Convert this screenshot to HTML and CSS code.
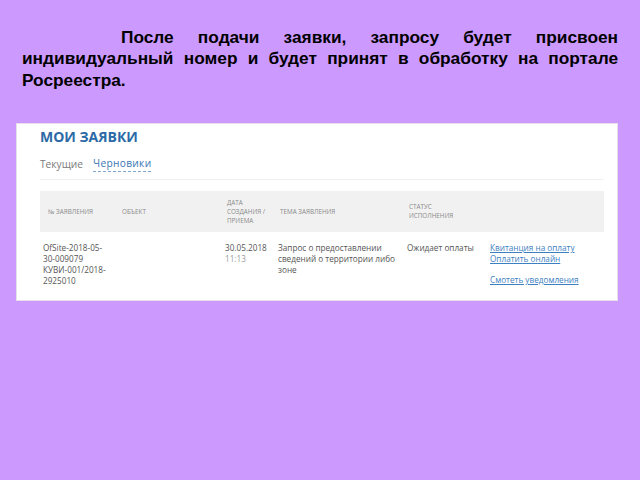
FILE: index.html
```html
<!DOCTYPE html>
<html lang="ru">
<head>
  <meta charset="UTF-8" />
  <title>Мои заявки</title>
  <link rel="stylesheet" href="styles.css">
</head>
<body>
  <p class="intro">После подачи заявки, запросу будет присвоен индивидуальный номер и будет принят в обработку на портале Росреестра.</p>

  <div class="panel">
    <h1 class="panel-title">МОИ ЗАЯВКИ</h1>
    <div class="tabs">
      <span class="tab">Текущие</span>
      <span class="tab tab-active">Черновики</span>
    </div>

    <div class="orders">
      <div class="orders-head">
        <div class="cell cell-num">№ заявления</div>
        <div class="cell">Объект</div>
        <div class="cell">Дата<br>создания /<br>приема</div>
        <div class="cell">Тема заявления</div>
        <div class="cell">Статус<br>исполнения</div>
        <div class="cell"></div>
      </div>
      <div class="orders-row">
        <div class="cell">OfSite-2018-05-<br>30-009079<br>КУВИ-001/2018-<br>2925010</div>
        <div class="cell"></div>
        <div class="cell">30.05.2018<br><span class="time">11:13</span></div>
        <div class="cell">Запрос о предоставлении сведений о территории либо зоне</div>
        <div class="cell">Ожидает оплаты</div>
        <div class="cell links">
          <a href="#">Квитанция на оплату</a>
          <a href="#">Оплатить онлайн</a>
          <a href="#" class="link-gap">Смотеть уведомления</a>
        </div>
      </div>
    </div>
  </div>
</body>
</html>
```

FILE: styles.css
```css
* {
  margin: 0;
  padding: 0;
  box-sizing: border-box;
}

body {
  background: #cc99ff;
  font-family: 'Liberation Sans', Arial, sans-serif;
  color: #000;
  padding: 27px 22px 0 16px;
}

.intro {
  font-size: 17.3px;
  font-weight: 700;
  line-height: 21.3px;
  text-align: justify;
  text-indent: 99px;
  padding-left: 6px;
  margin-bottom: 32px;
}

/* Screenshot panel */
.panel {
  width: 602px;
  height: 178px;
  background: #fff;
  border: 1px solid #e6e0ea;
  padding: 4px 13px 0 23px;
  font-family: 'Open Sans', sans-serif;
  color: #555;
}

.panel-title {
  font-size: 14px;
  font-weight: 700;
  line-height: 18px;
  color: #2b6aa6;
}

.tabs {
  display: flex;
  gap: 10px;
  margin-top: 10px;
  padding-bottom: 7px;
  border-bottom: 1px solid #f0f0f0;
  font-size: 10.2px;
  line-height: 16px;
}

.tab {
  color: #7a7a7a;
}

.tab-active {
  color: #3a77b4;
  border-bottom: 1px dashed #7fa6cc;
  line-height: 14px;
  letter-spacing: 0.3px;
}

.orders {
  margin-top: 11px;
}

.orders-head,
.orders-row {
  display: grid;
  grid-template-columns: 77px 105px 53px 129px 83px 1fr;
}

.orders-head {
  background: #f1f1f1;
  height: 41px;
  align-items: center;
  font-size: 6.3px;
  line-height: 9px;
  text-transform: uppercase;
  color: #8a8a8a;
}

.orders-head .cell {
  padding-left: 5px;
}

.orders-head .cell-num {
  padding-left: 8px;
}

.orders-row {
  padding-top: 10px;
  font-size: 8.2px;
  line-height: 11px;
  color: #555;
}

.orders-row .cell {
  padding-left: 3px;
  padding-right: 4px;
}

.time {
  color: #999;
}

.links {
  display: flex;
  flex-direction: column;
  align-items: flex-start;
}

.links a {
  color: #3d80c2;
}

.link-gap {
  margin-top: 10px;
}
```
